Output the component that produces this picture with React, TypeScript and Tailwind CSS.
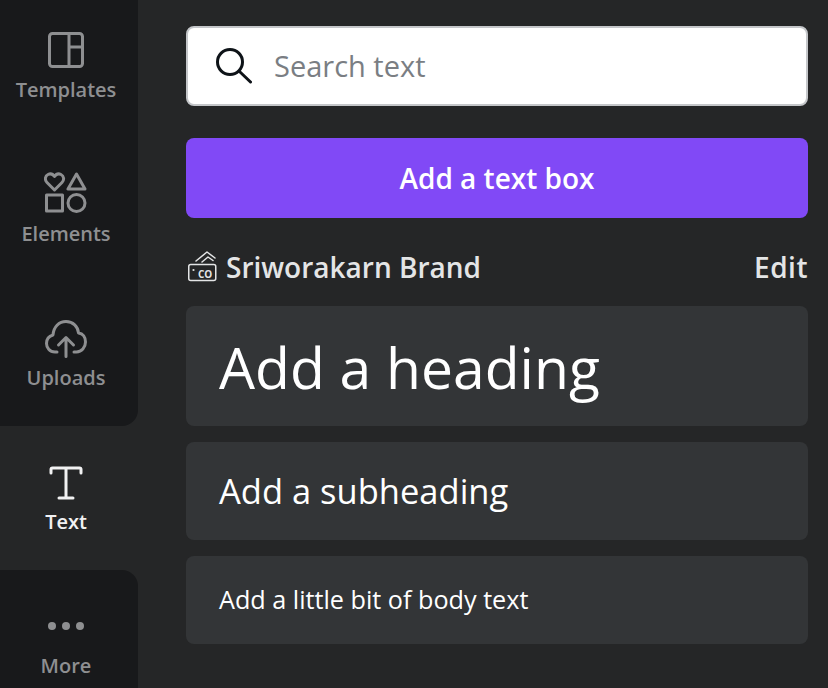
import { FC, ReactNode } from 'react'

const NavItem: FC<{ label: string; active?: boolean; children: ReactNode }> = ({ label, active, children }) => {
  return (
    <div className={active ? 'flex h-[144px] shrink-0 flex-col items-center pr-[6px] text-[#f1f1f2]' : 'flex h-[144px] shrink-0 flex-col items-center pr-[6px] text-[#8e8f91]'}>
      <div className="flex h-[84px] w-full items-end justify-center pb-[3px]">{children}</div>
      <span className="text-[20px] leading-[24px] font-semibold">{label}</span>
    </div>
  )
}

const TemplatesIcon: FC = () => (
  <svg width="36" height="36" viewBox="0 0 36 36" fill="none" stroke="currentColor" strokeWidth="3" className="mb-[7px]">
    <rect x="1.5" y="1.5" width="33" height="33" rx="3" />
    <path d="M21 1.5v33M21 15h13.5" />
  </svg>
)

const ElementsIcon: FC = () => (
  <svg width="44" height="42" viewBox="0 0 44 42" fill="none" stroke="currentColor" strokeWidth="3" strokeLinejoin="round" className="mb-[5px]">
    <path d="M10.5 18 3 10.5C.5 8 1 4 4 2.500c2.500-1.200 5-.3 6.500 2C12 2.200 14.500 1.300 17 2.500c3 1.500 3.500 5.500 1 8z" />
    <path d="M32.500 2 24 17h17z" />
    <rect x="2.500" y="23" width="16" height="16" />
    <circle cx="32.500" cy="31" r="8.500" />
  </svg>
)

const UploadsIcon: FC = () => (
  <svg width="42" height="38" viewBox="0 0 42 38" fill="none" stroke="currentColor" strokeWidth="3" strokeLinecap="round" strokeLinejoin="round" className="mb-[5px]">
    <path d="M12 32H10C4.500 32 1.500 27.500 1.500 23.500c0-4.500 3-7.500 6.500-8.500C8.500 7 14 1.500 21 1.500S33 6.500 33.500 13c4.500.5 7 4.500 7 9 0 5.500-4 10-9 10H29" />
    <path d="M21 36.500V18M13.500 25 21 17.500 28.500 25" />
  </svg>
)

const TextIcon: FC = () => (
  <svg width="34" height="34" viewBox="0 0 34 34" fill="none" stroke="currentColor" strokeWidth="3" strokeLinecap="round" strokeLinejoin="round" className="mb-[7px]">
    <path d="M2 7V3.500C2 2.500 2.500 2 3.500 2h27c1 0 1.500.5 1.500 1.500V7M17 2v30M10 32h14" />
  </svg>
)

const MoreIcon: FC = () => (
  <div className="mb-[21px] flex gap-[6px]">
    <span className="h-2 w-2 rounded-full bg-current" />
    <span className="h-2 w-2 rounded-full bg-current" />
    <span className="h-2 w-2 rounded-full bg-current" />
  </div>
)

const BrandIcon: FC = () => (
  <svg width="29" height="32" viewBox="0 0 29 32" fill="none" stroke="currentColor" strokeWidth="1.500" strokeLinecap="round" strokeLinejoin="round" className="-mt-[2px]">
    <rect x="0.750" y="14.500" width="27" height="16" rx="2" />
    <path d="M8 11 19 2l8 6M14 12l6-5 5 3.500" />
    <circle cx="5.500" cy="20" r="1.100" fill="currentColor" stroke="none" />
    <text x="10" y="27.500" fontSize="10" fontWeight="700" fill="currentColor" stroke="none">CO</text>
  </svg>
)

const App: FC = () => {
  return (
    <div className="flex h-[688px] w-[828px] overflow-hidden bg-[#252627] font-['Open_Sans',sans-serif]">
      <div className="-mt-[6px] flex h-[694px] w-[138px] shrink-0 flex-col">
        <div className="shrink-0 rounded-br-[16px] bg-[#18191b]">
          <NavItem label="Templates"><TemplatesIcon /></NavItem>
          <NavItem label="Elements"><ElementsIcon /></NavItem>
          <NavItem label="Uploads"><UploadsIcon /></NavItem>
        </div>
        <NavItem label="Text" active><TextIcon /></NavItem>
        <div className="flex-1 rounded-tr-[16px] bg-[#18191b]">
          <NavItem label="More"><MoreIcon /></NavItem>
        </div>
      </div>

      <div className="flex-1 pt-[26px] pl-[48px] pr-[20px]">
        <div className="flex h-[80px] items-center rounded-[8px] border-2 border-[#c4c6c9] bg-white pl-[28px]">
          <svg width="36" height="36" viewBox="0 0 36 36" fill="none" stroke="#0e1318" strokeWidth="3" strokeLinecap="round">
            <circle cx="14" cy="14" r="12.500" />
            <path d="M23.500 23.500 34.500 34" />
          </svg>
          <span className="ml-[22px] text-[29px] text-[#7a7e83]">Search text</span>
        </div>

        <button className="mt-[32px] flex h-[80px] w-full items-center justify-center rounded-[8px] bg-[#8149f6] text-[28px] font-semibold text-white">
          Add a text box
        </button>

        <div className="mt-[30px] flex h-[38px] items-center justify-between text-[#e4e5e6]">
          <div className="flex items-center gap-[9px] pl-[2px]">
            <BrandIcon />
            <span className="text-[28px] font-semibold">Sriworakarn Brand</span>
          </div>
          <span className="text-[28px] font-semibold tracking-[0.500px]">Edit</span>
        </div>

        <div className="mt-[20px] flex flex-col gap-[16px] text-white">
          <div className="flex h-[120px] items-center rounded-[8px] bg-[#333537] pt-[3px] pl-[33px] text-[57px] font-medium">Add a heading</div>
          <div className="flex h-[98px] items-center rounded-[8px] bg-[#333537] pl-[33px] text-[34.500px] font-medium">Add a subheading</div>
          <div className="flex h-[88px] items-center rounded-[8px] bg-[#333537] pl-[33px] text-[25.200px]">Add a little bit of body text</div>
        </div>
      </div>
    </div>
  )
}

export default App
